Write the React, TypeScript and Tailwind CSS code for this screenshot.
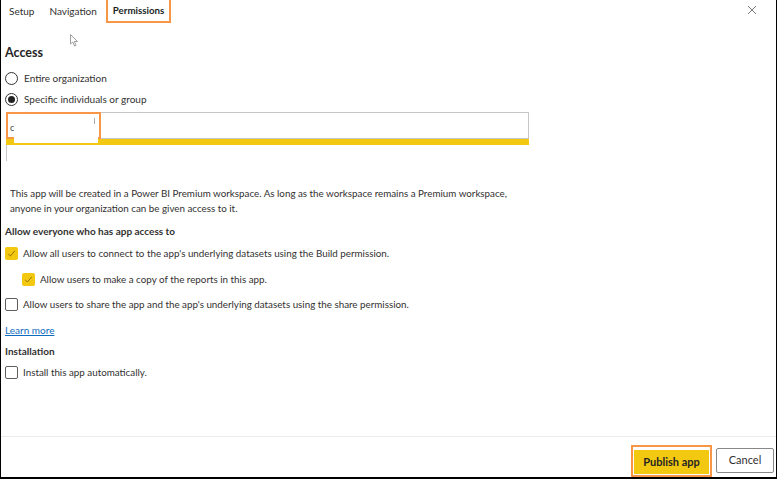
import React from 'react';

const font = { fontFamily: 'Lato, "Open Sans", sans-serif' };

function Radio({ checked, label }: { checked?: boolean; label: string }) {
  return (
    <div className="flex items-center h-[13px]">
      <span className="w-[13px] h-[13px] rounded-full border border-[#333] flex items-center justify-center">
        {checked && <span className="w-[7px] h-[7px] rounded-full bg-[#222]" />}
      </span>
      <span className="ml-[6px] text-[10px] text-[#323130]">{label}</span>
    </div>
  );
}

function Check({ checked, label }: { checked?: boolean; label: string }) {
  return (
    <div className="flex items-center h-[13px]">
      {checked ? (
        <span className="w-[13px] h-[13px] rounded-[2px] bg-[#f2c811] flex items-center justify-center">
          <svg width="9" height="9" viewBox="0 0 9 9">
            <path d="M1.2 4.8 L3.4 7 L7.8 1.8" fill="none" stroke="#8a6a00" strokeWidth="0.9" />
          </svg>
        </span>
      ) : (
        <span className="w-[13px] h-[13px] rounded-[2px] border border-[#605e5c]" />
      )}
      <span className="ml-[5px] text-[9.8px] text-[#323130]">{label}</span>
    </div>
  );
}

export default function App() {
  return (
    <div
      className="relative w-[777px] h-[479px] bg-white border-l border-r border-b-2 border-black flex flex-col overflow-hidden"
      style={font}
    >
      {/* tabs */}
      <div className="flex items-stretch h-[23px] text-[10px] text-[#323130]">
        <div className="pl-[8px] pr-[15px] flex items-center">Setup</div>
        <div className="pr-[9px] flex items-center">Navigation</div>
        <div className="px-[5px] flex items-center font-bold text-[9.7px] border-2 border-t-0 border-[#f79646] text-[#201f1e]">
          Permissions
        </div>
        <div className="flex-1" />
        <div className="pr-[19px] pt-[5px]">
          <svg width="10" height="10" viewBox="0 0 10 10">
            <path d="M1 1 L9 9 M9 1 L1 9" stroke="#777" strokeWidth="1" />
          </svg>
        </div>
      </div>

      {/* pointer cursor */}
      <svg className="absolute left-[69px] top-[34px]" width="9" height="13" viewBox="0 0 9 13">
        <path d="M0.5 0.5 L0.5 10 L2.8 8 L4.5 12 L6 11.3 L4.4 7.5 L7.5 7.5 Z" fill="#fff" stroke="#888" strokeWidth="0.8" />
      </svg>

      <div className="pl-[4px] flex flex-col">
        <div className="mt-[22px] text-[12.5px] font-bold text-[#252423] leading-[16px]">Access</div>
        <div className="mt-[11px]">
          <Radio label="Entire organization" />
        </div>
        <div className="mt-[8px]">
          <Radio checked label="Specific individuals or group" />
        </div>

        {/* people picker */}
        <div className="relative mt-[6px] ml-[1px] w-[523px]">
          <div className="h-[27px] border border-[#c8c6c4] bg-white" />
          <div className="h-[6px] bg-[#f2c811]" />
          <div className="h-[16px] border-l border-[#c8c6c4]" />
          <div className="absolute left-0 top-0 w-[95px] h-[27px] border-2 border-[#f79646]" />
          <span className="absolute left-[4px] top-[11px] text-[9px] text-[#444] leading-none">c</span>
          <span className="absolute left-[88px] top-[6px] w-px h-[6px] bg-[#aaa]" />
          <div className="absolute left-[8px] top-[15px] w-[84px] h-[16px] bg-white" />
        </div>

        <p className="mt-[25px] ml-[5px] text-[9.8px] leading-[15px] text-[#323130] w-[520px]">
          This app will be created in a Power BI Premium workspace. As long as the workspace remains a Premium workspace,
          anyone in your organization can be given access to it.
        </p>

        <div className="mt-[8px] text-[10px] font-bold text-[#323130] leading-[14px]">
          Allow everyone who has app access to
        </div>
        <div className="mt-[9px]">
          <Check checked label="Allow all users to connect to the app's underlying datasets using the Build permission." />
        </div>
        <div className="mt-[13px] ml-[17px]">
          <Check checked label="Allow users to make a copy of the reports in this app." />
        </div>
        <div className="mt-[12px]">
          <Check label="Allow users to share the app and the app's underlying datasets using the share permission." />
        </div>
        <a className="mt-[12px] text-[10px] text-[#0f6cbd] underline leading-[14px] w-fit">Learn more</a>
        <div className="mt-[7px] text-[10px] font-bold text-[#323130] leading-[14px]">Installation</div>
        <div className="mt-[8px]">
          <Check label="Install this app automatically." />
        </div>
      </div>

      <div className="flex-1" />
      {/* footer */}
      <div className="h-[41px] border-t border-[#edebe9] flex items-start justify-end pr-[2px] pt-[11px]">
        <div className="border-2 border-[#f79646] p-px -mt-[3px]">
          <button className="h-[24px] w-[75px] bg-[#f2c811] text-[11px] font-bold text-[#252423]">
            Publish app
          </button>
        </div>
        <button className="ml-[4px] h-[25px] w-[58px] border border-[#8a8886] rounded-[2px] bg-white text-[11px] text-[#323130]">
          Cancel
        </button>
      </div>
    </div>
  );
}
